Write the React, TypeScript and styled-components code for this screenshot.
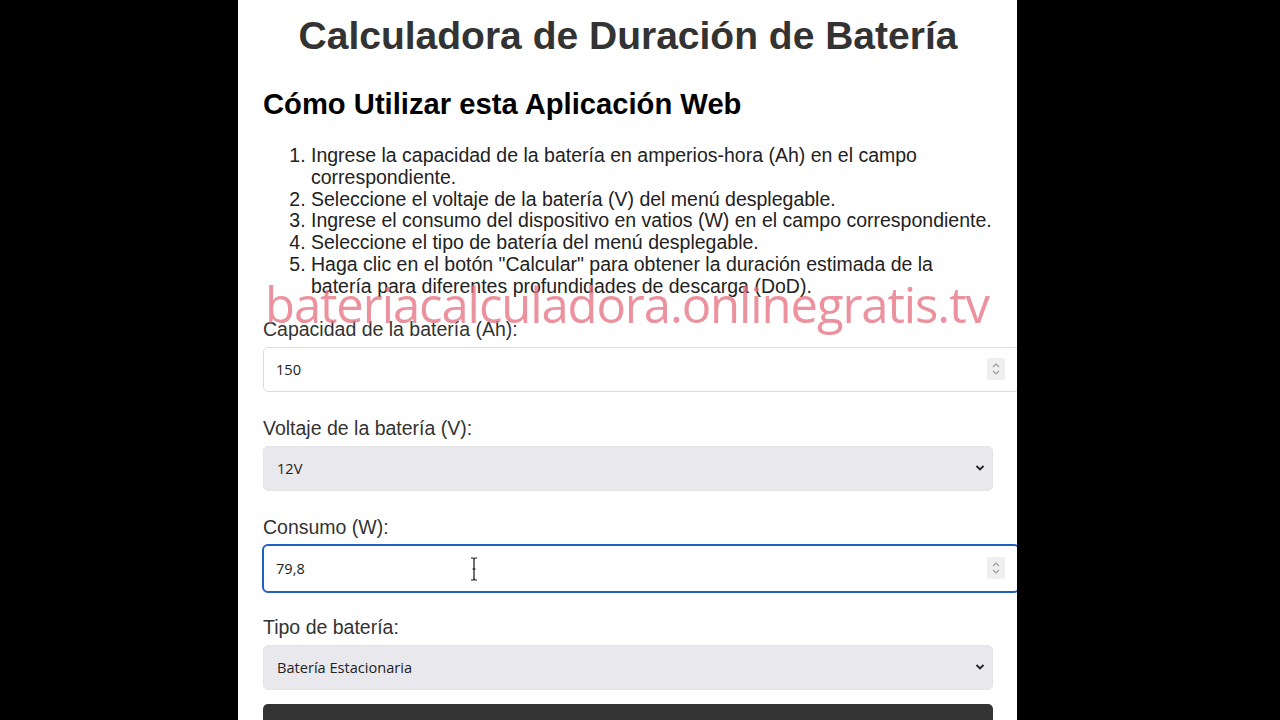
import { createGlobalStyle, styled } from 'styled-components';

const GlobalStyle = createGlobalStyle`
  html, body {
    margin: 0;
    padding: 0;
    background: #000;
    height: 100%;
    overflow: hidden;
  }
  body {
    font-family: "Liberation Sans", Arial, sans-serif;
  }
`;

const Page = styled.div`
  width: 1280px;
  height: 720px;
  background: #000;
  display: flex;
  overflow: hidden;
`;

const Column = styled.main`
  position: relative;
  margin-left: 238px;
  width: 779px;
  box-sizing: border-box;
  padding: 0 24px 0 25px;
  background: #fff;
  overflow: hidden;
`;

const Title = styled.h1`
  margin: 14px 0 0;
  font-size: 39px;
  line-height: 44px;
  font-weight: bold;
  color: #333;
  text-align: center;
`;

const SubTitle = styled.h2`
  margin: 29px 0 0;
  font-size: 29.2px;
  line-height: 34px;
  font-weight: bold;
  color: #000;
`;

const Steps = styled.ol`
  margin: 24px 0 0;
  padding-left: 48px;
  font-size: 19.5px;
  line-height: 21.8px;
  color: #222;
`;

const Field = styled.div`
  display: flex;
  flex-direction: column;
  margin-top: 20px;

  & + & {
    margin-top: 25px;
  }
`;

const Label = styled.label`
  font-size: 19.5px;
  line-height: 22px;
  color: #333;
  margin-bottom: 7px;
`;

const NumberBox = styled.div<{ focused?: boolean }>`
  position: relative;
  width: 100%;
  box-sizing: content-box;
  height: ${p => (p.focused ? 45 : 43)}px;
  padding: 0 12px;
  border: ${p => (p.focused ? '2px solid #1e5fc4' : '1px solid #ddd')};
  border-radius: ${p => (p.focused ? 6 : 5)}px;
  margin: ${p => (p.focused ? '-1px 0 -2px -1px' : '0')};
  display: flex;
  align-items: center;
  background: #fff;
  font-family: "Open Sans", "Noto Sans", sans-serif;
  font-size: 14.6px;
  color: #222;
`;

const Spinner = styled.span`
  position: absolute;
  right: 13px;
  top: 50%;
  transform: translateY(-50%);
  width: 18px;
  height: 22px;
  background: #efefef;
  border-radius: 2px;
  display: flex;
  align-items: center;
  justify-content: center;
`;

const SelectBox = styled.div`
  box-sizing: border-box;
  height: 45px;
  padding: 0 7px 0 13px;
  border-radius: 5px;
  background: #e9e8ed;
  border: 1px solid #e4e4e8;
  display: flex;
  align-items: center;
  justify-content: space-between;
  font-family: "Open Sans", "Noto Sans", sans-serif;
  font-size: 14.6px;
  color: #222;
`;

const Button = styled.button`
  display: block;
  margin-top: 14px;
  width: 100%;
  height: 46px;
  border: none;
  border-radius: 5px;
  background: #333;
  color: #fff;
  font-family: "Open Sans", "Noto Sans", sans-serif;
  font-size: 16px;
  padding-top: 4px;
`;

const Watermark = styled.div`
  position: absolute;
  left: 27px;
  top: 274px;
  font-family: "Open Sans", "Noto Sans", sans-serif;
  font-size: 49px;
  line-height: 60px;
  letter-spacing: -1.1px;
  color: rgba(230, 110, 125, 0.75);
  white-space: nowrap;
  pointer-events: none;
`;

const Cursor = styled.svg`
  position: absolute;
  left: 205px;
  top: 11px;
`;

function Chevron() {
  return (
    <svg width="10" height="8" viewBox="0 0 10 8">
      <path d="M1.5 2 L5 5.5 L8.5 2" fill="none" stroke="#222" strokeWidth="1.8" />
    </svg>
  );
}

function SpinArrows() {
  return (
    <svg width="10" height="16" viewBox="0 0 10 16">
      <path d="M2 6 L5 3 L8 6 M2 10 L5 13 L8 10" fill="none" stroke="#999" strokeWidth="1.1" />
    </svg>
  );
}

const steps = [
  'Ingrese la capacidad de la batería en amperios-hora (Ah) en el campo correspondiente.',
  'Seleccione el voltaje de la batería (V) del menú desplegable.',
  'Ingrese el consumo del dispositivo en vatios (W) en el campo correspondiente.',
  'Seleccione el tipo de batería del menú desplegable.',
  'Haga clic en el botón "Calcular" para obtener la duración estimada de la batería para diferentes profundidades de descarga (DoD).',
];

export default function App() {
  return (
    <Page>
      <GlobalStyle />
      <Column>
        <Title>Calculadora de Duración de Batería</Title>
        <SubTitle>Cómo Utilizar esta Aplicación Web</SubTitle>
        <Steps>
          {steps.map((s, i) => (
            <li key={i}>{s}</li>
          ))}
        </Steps>

        <Field>
          <Label>Capacidad de la batería (Ah):</Label>
          <NumberBox>
            150
            <Spinner><SpinArrows /></Spinner>
          </NumberBox>
        </Field>

        <Field>
          <Label>Voltaje de la batería (V):</Label>
          <SelectBox>
            12V
            <Chevron />
          </SelectBox>
        </Field>

        <Field>
          <Label>Consumo (W):</Label>
          <NumberBox focused>
            79,8
            <Cursor width="10" height="24" viewBox="0 0 10 24">
              <path d="M2 1 H4 Q5 1 5 3 V21 Q5 23 6 23 H8 M8 1 H6 Q5 1 5 3 M5 21 Q5 23 4 23 H2 M3.5 12 H6.5" fill="none" stroke="#111" strokeWidth="1.2" />
            </Cursor>
            <Spinner><SpinArrows /></Spinner>
          </NumberBox>
        </Field>

        <Field>
          <Label>Tipo de batería:</Label>
          <SelectBox>
            Batería Estacionaria
            <Chevron />
          </SelectBox>
        </Field>

        <Button>Calcular</Button>

        <Watermark>bateriacalculadora.onlinegratis.tv</Watermark>
      </Column>
    </Page>
  );
}
